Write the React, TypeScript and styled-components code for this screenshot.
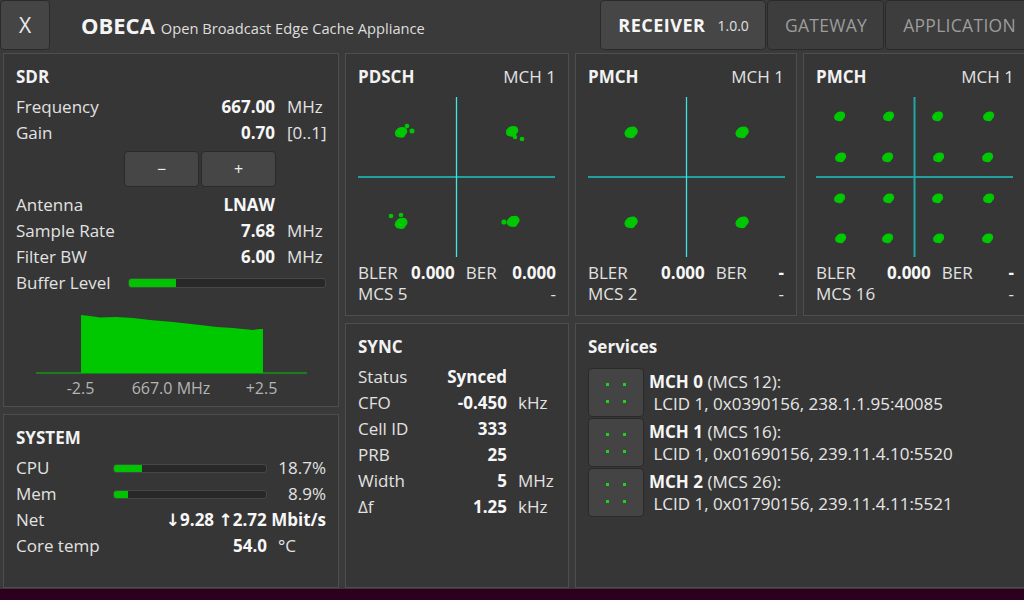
import React from "react";
import styled, { createGlobalStyle } from "styled-components";

const GlobalStyle = createGlobalStyle`
  html, body { margin: 0; padding: 0; background: #2c001e; }
  body {
    font-family: "Open Sans", "DejaVu Sans", sans-serif;
    color: #e2e2e2;
    overflow: hidden;
  }
  * { box-sizing: border-box; }
`;

const Screen = styled.div`
  width: 1024px;
  height: 589px;
  background: #3a3a3a;
  display: flex;
  flex-direction: column;
  overflow: hidden;
`;

const Header = styled.header`
  height: 50px;
  display: flex;
  align-items: stretch;
  flex-shrink: 0;
`;

const CloseButton = styled.button`
  width: 50px;
  height: 50px;
  background: #454545;
  border: 1px solid #2a2a2a;
  border-radius: 4px;
  color: #ececec;
  font: 400 21px "Open Sans", sans-serif;
  padding: 0;
`;

const Brand = styled.div`
  margin-left: 31px;
  align-self: center;
  display: flex;
  align-items: baseline;
  gap: 6px;
`;

const BrandName = styled.span`
  font-size: 22px;
  font-weight: 700;
  color: #f4f4f4;
`;

const BrandSub = styled.span`
  font-size: 14.7px;
  color: #dedede;
`;

const Tabs = styled.nav`
  margin-left: auto;
  display: flex;
  gap: 1px;
  margin-right: -9px;
  flex-shrink: 0;
`;

const Tab = styled.div<{ $active?: boolean }>`
  height: 50px;
  display: flex;
  align-items: center;
  gap: 12px;
  padding: 0 16px 0 17px;
  border: 1px solid #2a2a2a;
  border-radius: 4px;
  background: ${(p) => (p.$active ? "#464646" : "#3d3d3d")};
  color: ${(p) => (p.$active ? "#f6f6f6" : "#9c9c9c")};
  font-size: ${(p) => (p.$active ? "18px" : "17.5px")};
  letter-spacing: ${(p) => (p.$active ? "0.5px" : "0.3px")};
  font-weight: ${(p) => (p.$active ? 700 : 400)};
  white-space: nowrap;
`;

const Version = styled.span`
  font-size: 14px;
  font-weight: 400;
  letter-spacing: 0;
  color: #e0e0e0;
`;

const Main = styled.main`
  flex: 1;
  padding: 3px 0 0 3px;
  display: grid;
  grid-template-columns: 336px 224px 222px 224px;
  grid-template-rows: 263px 265px;
  column-gap: 6px;
  row-gap: 7px;
`;

const LeftColumn = styled.div`
  grid-row: 1 / 3;
  display: flex;
  flex-direction: column;
  gap: 7px;
  min-height: 0;
`;

const Panel = styled.section<{ $height?: number; $span?: string }>`
  background: #363636;
  border: 1px solid #4e4e4e;
  padding: 10px 12px 0 12px;
  display: flex;
  flex-direction: column;
  min-height: 0;
  overflow: hidden;
  font-size: 17px;
  ${(p) => (p.$height ? `height: ${p.$height}px; flex-shrink: 0;` : "flex: 1;")}
  ${(p) => (p.$span ? `grid-column: ${p.$span};` : "")}
`;

const PanelTitle = styled.h2`
  margin: 0 0 4px 0;
  font-size: 17px;
  font-weight: 700;
  line-height: 26px;
  color: #f2f2f2;
`;

const KVRow = styled.div`
  display: grid;
  grid-template-columns: 1fr auto 39px;
  column-gap: 12px;
  line-height: 26px;
`;

const Label = styled.span`
  color: #e2e2e2;
  white-space: nowrap;
`;

const Value = styled.span`
  font-weight: 700;
  color: #f7f7f7;
  text-align: right;
  white-space: nowrap;
`;

const Unit = styled.span`
  color: #e2e2e2;
  white-space: nowrap;
`;

const ButtonRow = styled.div`
  display: flex;
  justify-content: flex-end;
  gap: 2px;
  padding-right: 50px;
  margin: 5px 0;
`;

const GainButton = styled.button`
  width: 75px;
  height: 36px;
  background: #464646;
  border: 1px solid #2a2a2a;
  border-radius: 4px;
  color: #eeeeee;
  font: 400 16px "Open Sans", sans-serif;
  padding: 0;
`;

const BufferRow = styled.div`
  display: flex;
  align-items: center;
  line-height: 26px;
`;

const BufferLabel = styled.span`
  width: 112px;
  flex-shrink: 0;
  white-space: nowrap;
`;

const Bar = styled.div<{ $h?: number }>`
  flex: 1;
  height: ${(p) => p.$h ?? 10}px;
  background: #282828;
  border: 1px solid #474747;
  border-radius: 3px;
  overflow: hidden;
  display: flex;
`;

const BarFill = styled.div`
  background: #00c400;
  height: 100%;
`;

const SpectrumWrap = styled.div`
  align-self: center;
  width: 271px;
  margin-top: 9px;
  display: flex;
  flex-direction: column;
`;

const AxisLabels = styled.div`
  display: grid;
  grid-template-columns: 90px 91px 90px;
  margin-top: 3px;
  font-size: 16px;
  line-height: 20px;
  color: #b4b4b4;
  text-align: center;
`;

const SystemRow = styled.div`
  display: grid;
  grid-template-columns: 97px 154px 1fr;
  align-items: center;
  line-height: 26px;
`;

const RightText = styled.span<{ $bold?: boolean; $span?: string }>`
  text-align: right;
  white-space: nowrap;
  font-weight: ${(p) => (p.$bold ? 700 : 400)};
  color: ${(p) => (p.$bold ? "#f7f7f7" : "#e2e2e2")};
  ${(p) => (p.$span ? `grid-column: ${p.$span};` : "")}
`;

const UnitPad = styled.span`
  padding-left: 11px;
`;

const ConstHeader = styled.div`
  display: flex;
  justify-content: space-between;
  line-height: 26px;
`;

const ConstTitle = styled.span`
  font-weight: 700;
  color: #f2f2f2;
`;

const PlotSvg = styled.svg`
  display: block;
  margin-top: 7px;
  flex-shrink: 0;
`;

const StatsGrid = styled.div<{ $valW: number }>`
  display: grid;
  grid-template-columns: auto ${(p) => p.$valW}px auto 1fr;
  column-gap: 11px;
  line-height: 21px;
  margin-top: 5px;
`;

const McsRow = styled.div`
  display: flex;
  justify-content: space-between;
  line-height: 21px;
`;

const SyncRow = styled.div`
  display: grid;
  grid-template-columns: 88px 61px auto;
  line-height: 26px;
`;

const ServiceList = styled.div`
  display: flex;
  flex-direction: column;
  gap: 1px;
  margin-top: 4px;
`;

const ServiceRow = styled.div`
  display: flex;
  gap: 5px;
  height: 49px;
`;

const ServiceButton = styled.div`
  width: 56px;
  height: 49px;
  flex-shrink: 0;
  background: #444444;
  border: 1px solid #2a2a2a;
  border-radius: 4px;
  display: grid;
  grid-template-columns: 3px 3px;
  grid-template-rows: 3px 3px;
  gap: 14px;
  justify-content: center;
  align-content: center;
`;

const Dot = styled.span`
  width: 3px;
  height: 3px;
  background: #1ed21e;
`;

const ServiceText = styled.div`
  padding-top: 3px;
  line-height: 22px;
  white-space: pre;
  color: #e6e6e6;
`;

const Strong = styled.b`
  font-weight: 700;
  color: #f7f7f7;
`;

type Blob = { x: number; y: number; r: number; sats?: [number, number, number][] };

const GREEN = "#00c800";

function Constellation({ blobs, vColor, vWidth }: { blobs: Blob[]; vColor: string; vWidth: number }) {
  return (
    <PlotSvg width={197} height={160} viewBox="0 0 197 160">
      <line x1={0} y1={80} x2={197} y2={80} stroke="#20a0a0" strokeWidth={2} />
      <line x1={98.5} y1={0} x2={98.5} y2={160} stroke={vColor} strokeWidth={vWidth} />
      {blobs.map((b, i) => (
        <g key={i} fill={GREEN}>
          <circle cx={b.x} cy={b.y} r={b.r} />
          <circle cx={b.x - b.r * 0.4} cy={b.y + b.r * 0.25} r={b.r * 0.85} />
          <circle cx={b.x + b.r * 0.4} cy={b.y - b.r * 0.15} r={b.r * 0.9} />
          <circle cx={b.x + b.r * 0.1} cy={b.y + b.r * 0.4} r={b.r * 0.8} />
          {b.sats?.map(([dx, dy, r], j) => (
            <circle key={j} cx={b.x + dx} cy={b.y + dy} r={r} />
          ))}
        </g>
      ))}
    </PlotSvg>
  );
}

const pdschBlobs: Blob[] = [
  { x: 43, y: 35, r: 4.8, sats: [[6, -6, 2.3], [11, -1, 2.5]] },
  { x: 154, y: 34, r: 4.8, sats: [[3, 6, 2.2], [10, 8, 2.3]] },
  { x: 43, y: 126, r: 5, sats: [[-10, -7, 2.3], [0, -8, 2.3]] },
  { x: 155, y: 124, r: 5, sats: [[-9, 1, 2.6]] },
];

const pmch1Blobs: Blob[] = [
  { x: 43, y: 35, r: 5.2 },
  { x: 154, y: 35, r: 5.2 },
  { x: 43, y: 125, r: 5.2 },
  { x: 154, y: 125, r: 5.2 },
];

const qamX = [24, 72, 122, 172];
const qamY = [19, 60, 101, 141];
const pmch2Blobs: Blob[] = qamY.flatMap((y, yi) =>
  qamX.map((x, xi) => ({ x: x + ((xi + yi) % 2 ? 0.5 : -0.5), y, r: 4.3 }))
);

const specTop: [number, number][] = [
  [45, 10], [54, 11], [64, 12.5], [80, 12], [97, 13], [114, 15], [137, 17],
  [164, 20], [181, 22], [197, 23], [217, 25], [224, 24], [227, 24],
];

function Spectrum() {
  const pts = [[45, 68], ...specTop, [227, 68]].map((p) => p.join(",")).join(" ");
  return (
    <svg width={271} height={70} viewBox="0 0 271 70" style={{ display: "block" }}>
      <line x1={0} y1={68} x2={271} y2={68} stroke="#00c400" strokeWidth={1.2} />
      <polygon points={pts} fill="#00c800" />
    </svg>
  );
}

function ConstPanel({
  title,
  blobs,
  ber,
  mcs,
  valW,
  vColor,
  vWidth,
}: {
  title: string;
  blobs: Blob[];
  ber: string;
  mcs: string;
  valW: number;
  vColor: string;
  vWidth: number;
}) {
  return (
    <Panel>
      <ConstHeader>
        <ConstTitle>{title}</ConstTitle>
        <Label>MCH 1</Label>
      </ConstHeader>
      <Constellation blobs={blobs} vColor={vColor} vWidth={vWidth} />
      <StatsGrid $valW={valW}>
        <Label>BLER</Label>
        <Value>0.000</Value>
        <Label>BER</Label>
        <RightText $bold>{ber}</RightText>
      </StatsGrid>
      <McsRow>
        <Label>{mcs}</Label>
        <Label>-</Label>
      </McsRow>
    </Panel>
  );
}

const services = [
  { mch: "MCH 0", mcs: "(MCS 12):", line: "LCID 1, 0x0390156, 238.1.1.95:40085" },
  { mch: "MCH 1", mcs: "(MCS 16):", line: "LCID 1, 0x01690156, 239.11.4.10:5520" },
  { mch: "MCH 2", mcs: "(MCS 26):", line: "LCID 1, 0x01790156, 239.11.4.11:5521" },
];

export default function App() {
  return (
    <>
      <GlobalStyle />
      <Screen>
        <Header>
          <CloseButton>X</CloseButton>
          <Brand>
            <BrandName>OBECA</BrandName>
            <BrandSub>Open Broadcast Edge Cache Appliance</BrandSub>
          </Brand>
          <Tabs>
            <Tab $active>
              RECEIVER <Version>1.0.0</Version>
            </Tab>
            <Tab>GATEWAY</Tab>
            <Tab>APPLICATION</Tab>
          </Tabs>
        </Header>
        <Main>
          <LeftColumn>
            <Panel $height={354}>
              <PanelTitle>SDR</PanelTitle>
              <KVRow>
                <Label>Frequency</Label>
                <Value>667.00</Value>
                <Unit>MHz</Unit>
              </KVRow>
              <KVRow>
                <Label>Gain</Label>
                <Value>0.70</Value>
                <Unit>[0..1]</Unit>
              </KVRow>
              <ButtonRow>
                <GainButton>−</GainButton>
                <GainButton>+</GainButton>
              </ButtonRow>
              <KVRow>
                <Label>Antenna</Label>
                <Value>LNAW</Value>
                <Unit />
              </KVRow>
              <KVRow>
                <Label>Sample Rate</Label>
                <Value>7.68</Value>
                <Unit>MHz</Unit>
              </KVRow>
              <KVRow>
                <Label>Filter BW</Label>
                <Value>6.00</Value>
                <Unit>MHz</Unit>
              </KVRow>
              <BufferRow>
                <BufferLabel>Buffer Level</BufferLabel>
                <Bar>
                  <BarFill style={{ width: "24%" }} />
                </Bar>
              </BufferRow>
              <SpectrumWrap>
                <Spectrum />
                <AxisLabels>
                  <span>-2.5</span>
                  <span>667.0 MHz</span>
                  <span>+2.5</span>
                </AxisLabels>
              </SpectrumWrap>
            </Panel>
            <Panel>
              <PanelTitle>SYSTEM</PanelTitle>
              <SystemRow>
                <Label>CPU</Label>
                <Bar $h={9}>
                  <BarFill style={{ width: "18.7%" }} />
                </Bar>
                <RightText>18.7%</RightText>
              </SystemRow>
              <SystemRow>
                <Label>Mem</Label>
                <Bar $h={9}>
                  <BarFill style={{ width: "8.9%" }} />
                </Bar>
                <RightText>8.9%</RightText>
              </SystemRow>
              <SystemRow>
                <Label>Net</Label>
                <RightText $bold $span="2 / 4">↓9.28 ↑2.72 Mbit/s</RightText>
              </SystemRow>
              <SystemRow>
                <Label>Core temp</Label>
                <RightText $bold>54.0</RightText>
                <UnitPad>°C</UnitPad>
              </SystemRow>
            </Panel>
          </LeftColumn>

          <ConstPanel title="PDSCH" blobs={pdschBlobs} ber="0.000" mcs="MCS 5" valW={46} vColor="#3ee6e6" vWidth={1.3} />
          <ConstPanel title="PMCH" blobs={pmch1Blobs} ber="-" mcs="MCS 2" valW={66} vColor="#3ee0e0" vWidth={1.3} />
          <ConstPanel title="PMCH" blobs={pmch2Blobs} ber="-" mcs="MCS 16" valW={64} vColor="#22a6a6" vWidth={2} />

          <Panel>
            <PanelTitle>SYNC</PanelTitle>
            <SyncRow>
              <Label>Status</Label>
              <Value>Synced</Value>
              <span />
            </SyncRow>
            <SyncRow>
              <Label>CFO</Label>
              <Value>-0.450</Value>
              <UnitPad>kHz</UnitPad>
            </SyncRow>
            <SyncRow>
              <Label>Cell ID</Label>
              <Value>333</Value>
              <span />
            </SyncRow>
            <SyncRow>
              <Label>PRB</Label>
              <Value>25</Value>
              <span />
            </SyncRow>
            <SyncRow>
              <Label>Width</Label>
              <Value>5</Value>
              <UnitPad>MHz</UnitPad>
            </SyncRow>
            <SyncRow>
              <Label>Δf</Label>
              <Value>1.25</Value>
              <UnitPad>kHz</UnitPad>
            </SyncRow>
          </Panel>

          <Panel $span="3 / 5">
            <PanelTitle>Services</PanelTitle>
            <ServiceList>
              {services.map((s) => (
                <ServiceRow key={s.mch}>
                  <ServiceButton>
                    <Dot />
                    <Dot />
                    <Dot />
                    <Dot />
                  </ServiceButton>
                  <ServiceText>
                    <Strong>{s.mch}</Strong> {s.mcs}
                    {"\n "}
                    {s.line}
                  </ServiceText>
                </ServiceRow>
              ))}
            </ServiceList>
          </Panel>
        </Main>
      </Screen>
    </>
  );
}
